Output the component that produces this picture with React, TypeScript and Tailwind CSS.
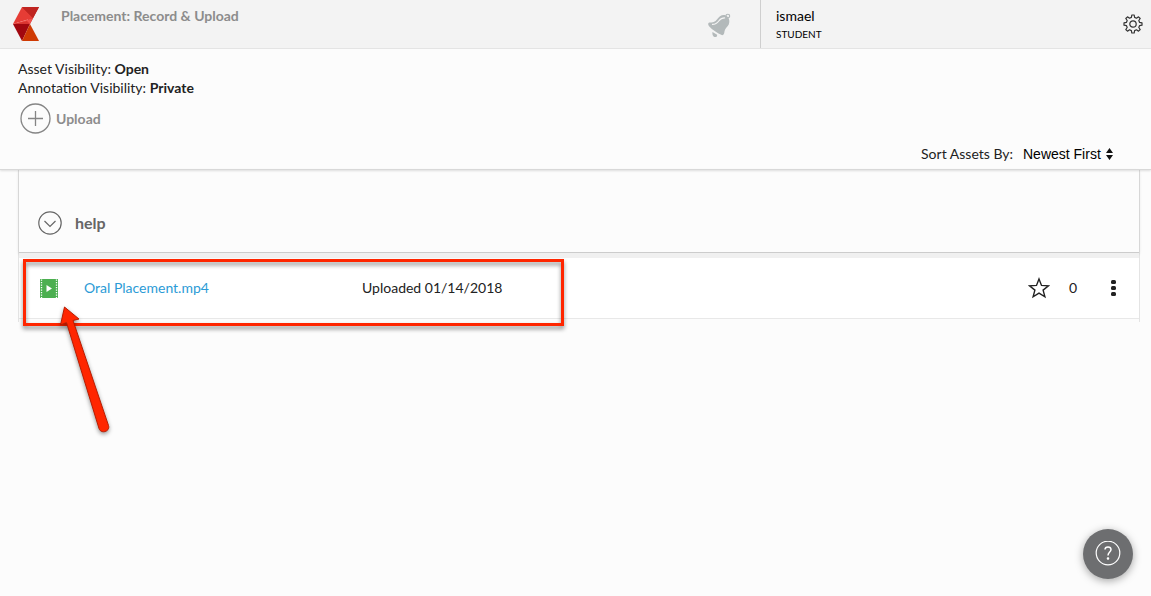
import React, { useState } from "react";

type Asset = {
  name: string;
  uploaded: string;
  likes: number;
};

const assets: Asset[] = [
  { name: "Oral Placement.mp4", uploaded: "01/14/2018", likes: 0 },
];

const Logo = () => (
  <svg className="h-[35px] w-[27px]" viewBox="0 0 27 35" aria-hidden="true">
    <path d="M9 0H26L17 17L9 0Z" fill="#b8201f" />
    <path d="M9 0L20 11L0 17L9 0Z" fill="#e63c35" />
    <path d="M9 0H26L20 11Z" fill="#bf2420" />
    <path d="M20 11L0 17H17Z" fill="#f2504c" />
    <path d="M0 17L14 14L17 17Z" fill="#d93530" />
    <path d="M0 17H17L9 34L0 17Z" fill="#a1070f" />
    <path d="M17 17L26 34H9L17 17Z" fill="#cf3a03" />
  </svg>
);

const BellIcon = () => (
  <svg className="size-7" viewBox="0 0 28 28" aria-hidden="true">
    <circle cx="23.500" cy="5.500" r="2" fill="none" stroke="#b3b9ba" strokeWidth="1.3" />
    <path
      d="M23.500 6.500C25.500 9 25.500 12 24.500 14.500C23.500 17 20.500 18.500 20 21.500C19.700 24 19.500 25.500 17.500 26C12 24 7 20.500 3.300 16.500C2 15 2 13 3.500 12.500C7 12.500 10 12 12 9C14.500 5 19.500 2 23.500 6.500Z"
      fill="#b3b9ba"
    />
    <path d="M7 22.500C6.500 25 7.500 28 10 28C11.500 28 12 27 12 25.500Z" fill="#b3b9ba" />
    <path
      d="M7 14.500C11 14.500 12.500 12.500 14 10.500C15.500 8.500 17.500 7.500 20 7.500"
      fill="none"
      stroke="#f3f3f3"
      strokeWidth="1.3"
      strokeLinecap="round"
    />
  </svg>
);

const GearIcon = () => (
  <svg
    className="size-5"
    viewBox="0 0 20 20"
    fill="none"
    stroke="#333"
    strokeWidth="1.2"
    strokeLinejoin="round"
    aria-hidden="true"
  >
    <path d="M8.8 1h2.400l.4 2.400 1.900.8 2-1.400 1.700 1.700-1.400 2 .8 1.900 2.400.4v2.400l-2.400.4-.8 1.900 1.400 2-1.700 1.700-2-1.400-1.900.8-.4 2.400H8.800l-.4-2.400-1.900-.8-2 1.400-1.700-1.700 1.400-2-.8-1.900L1 11.200V8.800l2.400-.4.8-1.900-1.400-2 1.700-1.700 2 1.400 1.900-.8Z" />
    <circle cx="10" cy="10" r="3.200" />
  </svg>
);

const FilmIcon = () => (
  <svg className="h-[19px] w-5" viewBox="0 0 20 19" aria-hidden="true">
    <rect x="1" width="18" height="19" fill="#4caf50" />
    <path
      d="M2.500 0.500V19M17.500 0.500V19"
      stroke="#fff"
      strokeWidth="1.300"
      strokeDasharray="1.300 1.200"
    />
    <path d="M7.500 6L13 9.500L7.500 13Z" fill="#fff" />
  </svg>
);

const StarIcon = () => (
  <svg className="size-[22px]" viewBox="0 0 22 22" aria-hidden="true">
    <path
      d="M11 2L13.500 8.400L20.500 8.800L15.100 13.100L16.900 19.800L11 16.100L5.100 19.800L6.900 13.100L1.500 8.800L8.500 8.400Z"
      fill="none"
      stroke="#222"
      strokeWidth="1.400"
    />
  </svg>
);

// Red frame and arrow that point out the uploaded video
const Callout = () => (
  <div className="pointer-events-none">
    <div className="absolute left-1 top-px h-[67px] w-[541px] border-[3px] border-[#ff2600] drop-shadow-[0_3px_2px_rgba(0,0,0,0.45)]" />
    <svg
      className="absolute left-[31px] top-[42px] h-[145px] w-[70px] drop-shadow-[0_2px_2px_rgba(0,0,0,0.4)]"
      viewBox="0 0 70 145"
      aria-hidden="true"
    >
      <path
        d="M14.500 7L29 19L23 20.500L58.500 125.500C60.500 131.500 51 134.500 49 128.500L16.500 22.500L10.500 25Z"
        fill="#ff2600"
        stroke="#b81c00"
        strokeLinejoin="round"
      />
    </svg>
  </div>
);

const Header = () => (
  <header className="flex h-[49px] border-b border-[#e6e6e6] bg-[#f3f3f3]">
    <div className="flex flex-1 items-start pl-[13px] pt-[7px]">
      <Logo />
      <h1 className="ml-[21px] text-sm leading-[18px] font-bold text-[#8c8c8c]">
        Placement: Record &amp; Upload
      </h1>
    </div>
    <button className="mr-7 flex w-[26px] items-center justify-center" aria-label="Notifications">
      <BellIcon />
    </button>
    <div className="flex w-[391px] items-center justify-between border-l border-[#cfcfcf] pl-[15px] pr-2">
      <div className="pt-0.5 text-black">
        <p className="text-sm leading-[18px]">ismael</p>
        <p className="text-[10px] leading-[18px]">STUDENT</p>
      </div>
      <button aria-label="Settings">
        <GearIcon />
      </button>
    </div>
  </header>
);

const Toolbar = () => (
  <section className="relative border-b border-[#d8d8d8] px-[18px] pb-[5px] pt-[10px] shadow-[0_1px_2px_rgba(0,0,0,0.12)]">
    <p className="text-sm leading-[19px]">
      Asset Visibility: <b>Open</b>
    </p>
    <p className="text-sm leading-[19px]">
      Annotation Visibility: <b>Private</b>
    </p>
    <button className="ml-0.5 mt-[6px] flex items-center gap-[5px] text-sm font-bold text-[#8c8c8c]">
      <svg
        className="size-[31px]"
        viewBox="0 0 31 31"
        fill="none"
        stroke="#858585"
        strokeWidth="1.300"
        aria-hidden="true"
      >
        <circle cx="15.500" cy="15.500" r="14.500" />
        <path d="M15.500 8V23M8 15.500H23" />
      </svg>
      Upload
    </button>
    <div className="mr-5 mt-[10px] flex items-center justify-end text-sm leading-5">
      <label htmlFor="sort">Sort Assets By:</label>
      <div className="relative ml-[10px]">
        <select
          id="sort"
          className="block w-[90px] appearance-none bg-transparent font-['Liberation_Sans',Arial,sans-serif] text-sm leading-5 text-black"
        >
          <option>Newest First</option>
        </select>
        <svg
          className="pointer-events-none absolute right-0 top-1 h-3 w-[7px]"
          viewBox="0 0 7 12"
          aria-hidden="true"
        >
          <path d="M3.500 0L7 5H0ZM3.500 12L0 7H7Z" fill="#111" />
        </svg>
      </div>
    </div>
  </section>
);

const AssetRow: React.FC<{ asset: Asset }> = ({ asset }) => (
  <li className="relative flex h-[60px] items-center bg-white pl-5 pr-[18px] text-sm">
    <FilmIcon />
    <a href="#" className="ml-[25px] w-[278px] text-[#2c9bd6]">
      {asset.name}
    </a>
    <span>Uploaded {asset.uploaded}</span>
    <div className="ml-auto flex items-center">
      <button aria-label="Favorite">
        <StarIcon />
      </button>
      <span className="ml-[19px]">{asset.likes}</span>
      <button className="ml-[29px]" aria-label="More options">
        <svg className="h-4 w-[15px]" viewBox="0 0 15 16" fill="#222" aria-hidden="true">
          <rect x="5" width="5" height="4" rx="1.500" />
          <rect x="5" y="6" width="5" height="4" rx="1.500" />
          <rect x="5" y="12" width="5" height="4" rx="1.500" />
        </svg>
      </button>
    </div>
    <Callout />
  </li>
);

export default function App() {
  const [open, setOpen] = useState(true);

  return (
    <div className="min-h-screen bg-[#fcfcfc] font-[Lato,sans-serif] text-[#222]">
      <Header />
      <Toolbar />
      <main className="ml-[18px] mr-[11px] border-x border-[#e4e4e4] pb-[3px]">
        <div className="flex h-[83px] items-end border-b border-[#cccccc] pb-[17px] pl-[19px] shadow-[0_1px_3px_rgba(0,0,0,0.15)]">
          <button
            className="flex items-center gap-[13px] text-[#666]"
            aria-expanded={open}
            onClick={() => setOpen(!open)}
          >
            <svg
              className={`size-6 ${open ? "" : "-rotate-90"}`}
              viewBox="0 0 24 24"
              fill="none"
              stroke="#666"
              strokeWidth="1.200"
              aria-hidden="true"
            >
              <circle cx="12" cy="12" r="11.200" />
              <path d="M6.500 10L12 15.500L17.500 10" />
            </svg>
            <span className="text-base leading-6 font-bold">help</span>
          </button>
        </div>
        {open && (
          <ul className="border-b border-t-[5px] border-b-[#e8e8e8] border-t-[#f0f0f0]">
            {assets.map((asset) => (
              <AssetRow key={asset.name} asset={asset} />
            ))}
          </ul>
        )}
      </main>
      <button
        className="fixed bottom-[17px] right-[18px] flex size-[50px] items-center justify-center rounded-full bg-[#6d6e70] shadow-[0_2px_8px_rgba(0,0,0,0.35)]"
        aria-label="Help"
      >
        <svg
          className="size-[26px]"
          viewBox="0 0 26 26"
          fill="none"
          stroke="#fff"
          strokeWidth="1.200"
          aria-hidden="true"
        >
          <circle cx="13" cy="12" r="11.800" />
          <path d="M10 8.500C10 5 16 5 16 8.500C16 11 13 11 13 14.500" strokeWidth="1.500" />
          <circle cx="13" cy="17.500" r="0.700" fill="#fff" />
        </svg>
      </button>
    </div>
  );
}
